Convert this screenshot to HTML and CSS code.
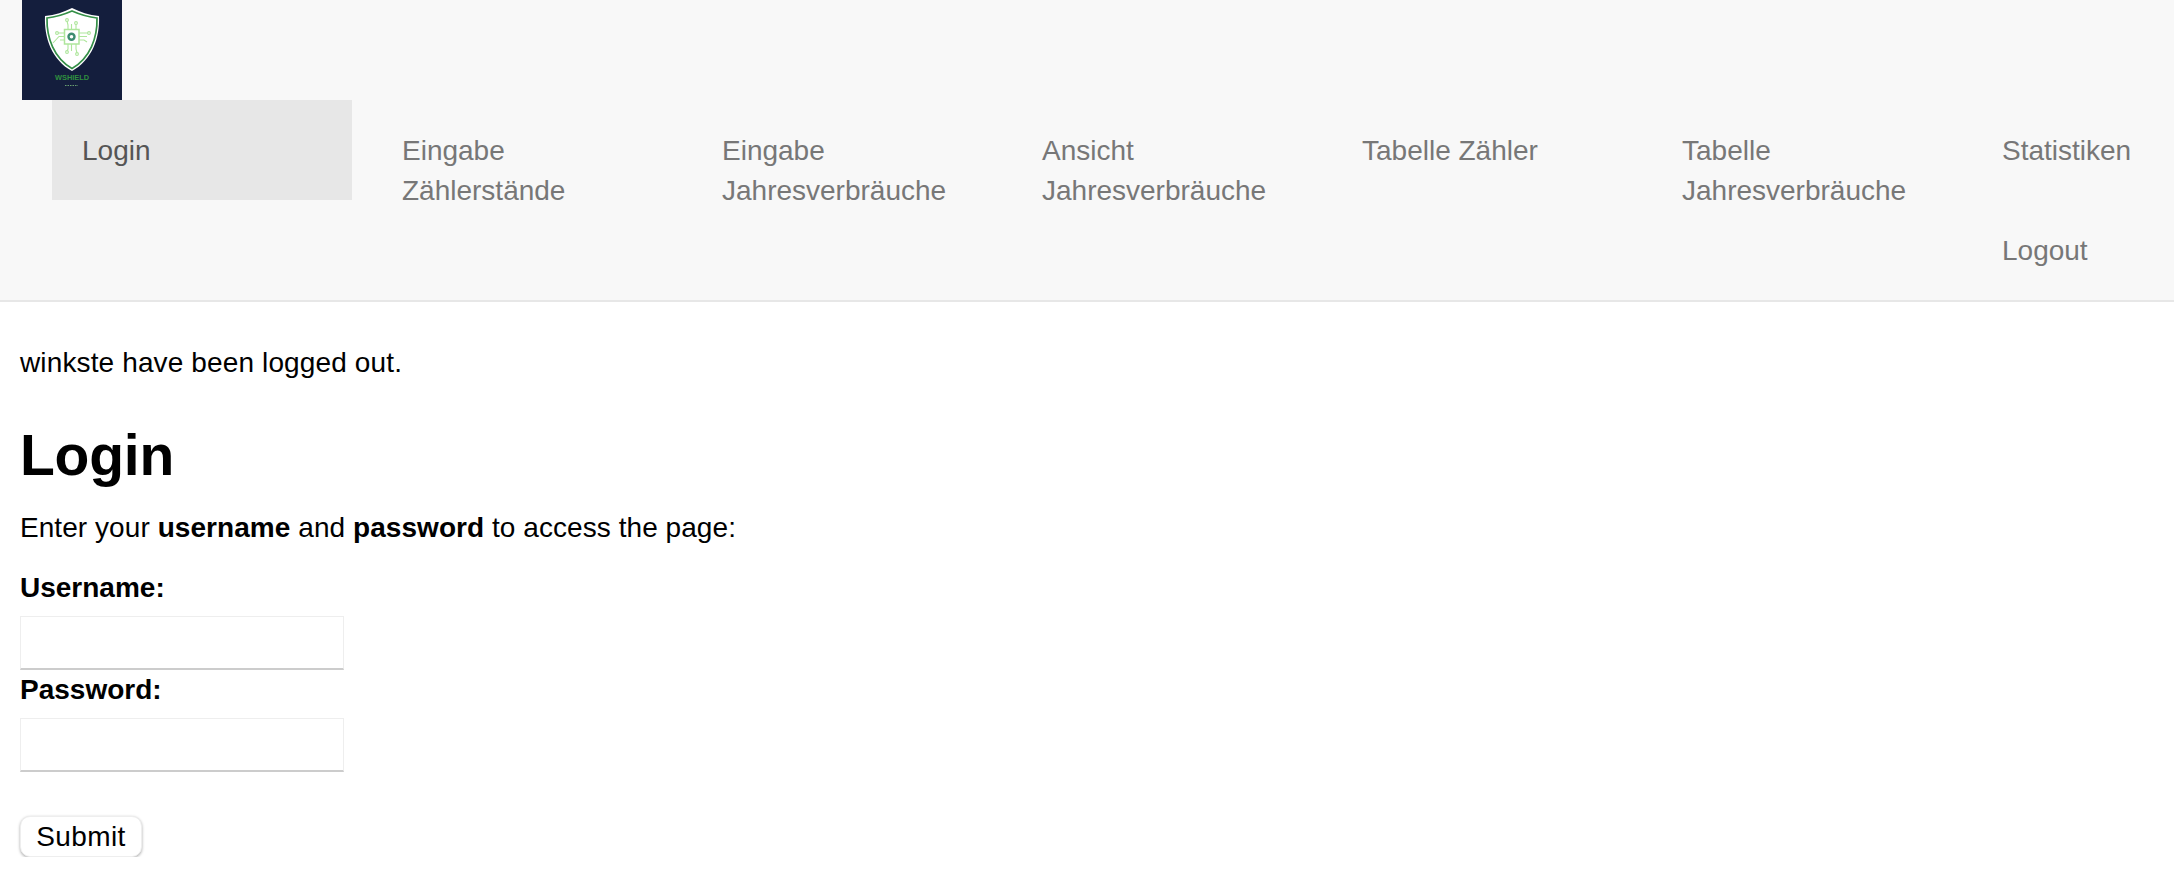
FILE: index.html
```html
<!DOCTYPE html>
<html lang="en">
<head>
  <meta charset="UTF-8" />
  <title>Login</title>
  <link rel="stylesheet" href="styles.css">
</head>
<body>
  <header class="site-header">
    <a class="logo" href="#">
      <svg viewBox="0 0 100 100" width="100" height="100" aria-label="WSHIELD logo">
        <rect width="100" height="100" fill="#141e3d"/>
        <path d="M50 8 C58 12 67 15 77 16 C78 38 70 60 50 71 C30 60 22 38 23 16 C33 15 42 12 50 8 Z" fill="#fff"/>
        <path d="M50 11 C58 14.500 66 17 75 18 C75.500 38 68 58 50 68.500 C32 58 24.500 38 25 18 C34 17 42 14.500 50 11 Z" fill="#fff" stroke="#348f47" stroke-width="1.700"/>
        <g fill="none" stroke="#aee69c" stroke-width="1.100">
          <rect x="42.500" y="29.500" width="14.500" height="14.500" stroke-width="1.500"/>
          <path d="M46 29.500 V25 L45 21 M49.500 29.500 V24 M54 29.500 V24 M46 44 V49 L45 51 M49.500 44 V51 M54 44 V49 L55 53"/>
          <path d="M42.500 33 H37 L36 33 M42.500 36.500 H37 L31 43 M42.500 40 H38 M57 33 H63 L66 33 M57 36.500 H65 M57 40 H62 L65 42"/>
          <circle cx="45" cy="20" r="1.400"/><circle cx="54" cy="23" r="1.400"/><circle cx="45" cy="52" r="1.400"/><circle cx="55" cy="54" r="1.400"/>
          <circle cx="35" cy="33" r="1.400"/><circle cx="67" cy="33" r="1.400"/>
        </g>
        <circle cx="49.500" cy="36.800" r="3" fill="none" stroke="#3d8c70" stroke-width="2.400"/>
        <text class="logo-name" x="33" y="80" textLength="34" lengthAdjust="spacingAndGlyphs">WSHIELD</text>
        <path d="M43 85.500 H56" stroke="#7fbf7f" stroke-width="0.800" stroke-dasharray="1.500 1"/>
      </svg>
    </a>
    <nav class="main-nav">
      <a class="nav-item active" href="#">Login</a>
      <a class="nav-item" href="#">Eingabe Zählerstände</a>
      <a class="nav-item" href="#">Eingabe Jahresverbräuche</a>
      <a class="nav-item" href="#">Ansicht Jahresverbräuche</a>
      <a class="nav-item" href="#">Tabelle Zähler</a>
      <a class="nav-item" href="#">Tabelle Jahresverbräuche</a>
      <div class="nav-last">
        <a class="nav-item" href="#">Statistiken</a>
        <a class="nav-item" href="#">Logout</a>
      </div>
    </nav>
  </header>

  <main class="content">
    <p class="message">winkste have been logged out.</p>
    <h1>Login</h1>
    <p class="intro">Enter your <b>username</b> and <b>password</b> to access the page:</p>
    <form class="login-form">
      <label for="username">Username:</label>
      <input id="username" type="text">
      <label for="password">Password:</label>
      <input id="password" type="password">
      <button type="button">Submit</button>
    </form>
  </main>
</body>
</html>
```

FILE: styles.css
```css
* {
  box-sizing: border-box;
}

body {
  margin: 0;
  font-family: 'Liberation Sans', Arial, sans-serif;
  font-size: 28px;
  line-height: 40px;
  color: #000;
  background-color: #fff;
}

.site-header {
  background-color: #f8f8f8;
  border-bottom: 2px solid #e7e7e7;
  height: 302px;
}

.logo {
  display: block;
  width: 100px;
  height: 100px;
  margin-left: 22px;
}

.logo svg {
  display: block;
}

.logo-name {
  font-family: 'Liberation Sans', Arial, sans-serif;
  font-size: 8px;
  font-weight: bold;
  fill: #2f8f3f;
}

.main-nav {
  display: flex;
  align-items: flex-start;
  gap: 20px;
  padding-left: 52px;
}

.nav-item {
  display: block;
  width: 300px;
  padding: 31px 30px 29px;
  color: #777;
  text-decoration: none;
}

.nav-item.active {
  background-color: #e7e7e7;
  color: #555;
}

.nav-last .nav-item {
  width: 202px;
}

.content {
  padding: 0 20px;
}

.message {
  margin: 0;
  padding-top: 41px;
  letter-spacing: 0.13px;
}

h1 {
  font-size: 57px;
  font-weight: bold;
  line-height: 60px;
  letter-spacing: -0.2px;
  margin: 42px 0 0;
}

.intro {
  margin: 23px 0 0;
  letter-spacing: 0.06px;
}

.login-form {
  margin-top: 20px;
}

label {
  display: block;
  font-weight: bold;
}

input {
  display: block;
  width: 324px;
  height: 54px;
  margin-top: 8px;
  border: 1px solid #eee;
  border-bottom: 2px solid #ccc;
  background-color: #fff;
}

button {
  display: block;
  margin-top: 44px;
  width: 122px;
  height: 41px;
  padding: 0;
  font: inherit;
  letter-spacing: 0.4px;
  color: #000;
  background-color: #fff;
  border: 1px solid #eee;
  border-radius: 10px;
  box-shadow: 0 1px 3px rgba(0,0,0,0.35);
}
```
